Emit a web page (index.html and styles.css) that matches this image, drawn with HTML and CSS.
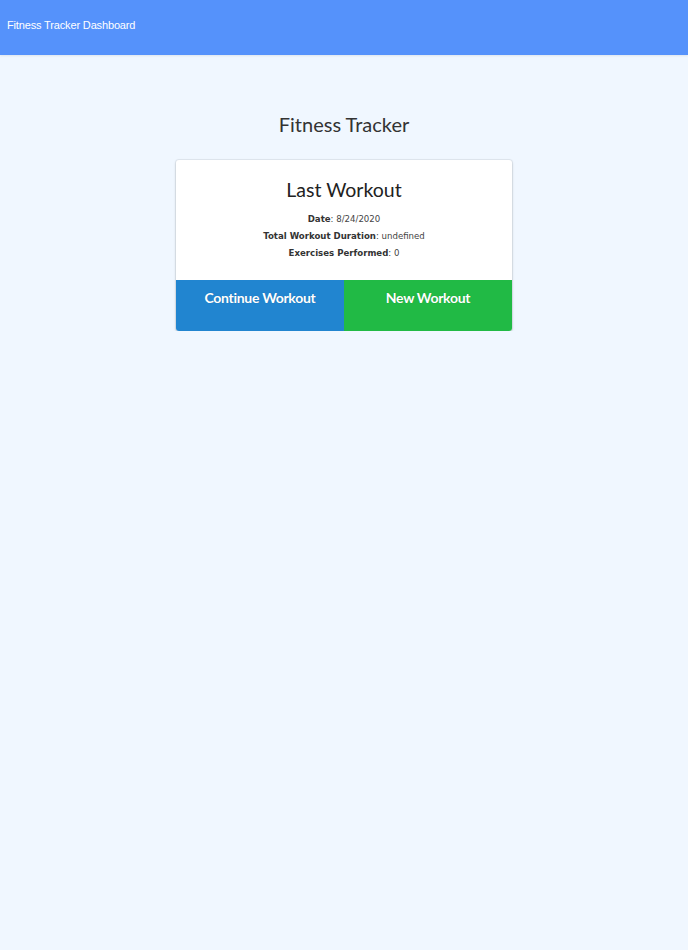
FILE: index.html
```html
<!DOCTYPE html>
<html>
<head>
<meta charset="utf-8">
<link rel="stylesheet" href="styles.css">
</head>
<body>
<header class="topbar">Fitness Tracker Dashboard</header>
<main class="content">
  <h1 class="page-title">Fitness Tracker</h1>
  <section class="card">
    <div class="card-body">
      <h2 class="card-title">Last Workout</h2>
      <p class="stat"><strong>Date</strong>: 8/24/2020</p>
      <p class="stat"><strong>Total Workout Duration</strong>: undefined</p>
      <p class="stat"><strong>Exercises Performed</strong>: 0</p>
    </div>
    <div class="actions">
      <button class="btn btn-blue">Continue Workout</button>
      <button class="btn btn-green">New Workout</button>
    </div>
  </section>
</main>
</body>
</html>
```
FILE: styles.css
```css
html, body {
  margin: 0;
  padding: 0;
  background: #f0f7ff;
  min-height: 100%;
}
body {
  font-family: Lato, "Liberation Sans", sans-serif;
}
.topbar {
  height: 55px;
  background: #5592fb;
  color: #fff;
  font-family: "Liberation Sans", Arial, sans-serif;
  font-size: 11px;
  line-height: 12px;
  letter-spacing: -0.15px;
  padding: 19px 0 0 7px;
  box-sizing: border-box;
  box-shadow: 0 1px 2px rgba(0,0,0,0.08);
}
.content {
  display: flex;
  flex-direction: column;
  align-items: center;
}
.page-title {
  margin: 57px 0 24px;
  font-weight: 400;
  font-size: 20px;
  line-height: 24px;
  color: #333;
}
.card {
  width: 336px;
  background: #fff;
  border-radius: 3px;
  box-shadow: 0 1px 3px rgba(0,0,0,0.18), 0 0 0 1px rgba(34,36,38,0.06);
  overflow: hidden;
}
.card-body {
  padding: 17px 0 18px;
  text-align: center;
}
.card-title {
  margin: 0 0 8px;
  font-weight: 400;
  font-size: 19.5px;
  line-height: 26px;
  color: #222;
}
.stat {
  margin: 0;
  font-family: "DejaVu Sans", Verdana, sans-serif;
  font-size: 8.6px;
  line-height: 17px;
  color: #444;
}
.stat strong {
  color: #333;
}
.actions {
  display: flex;
}
.btn {
  flex: 1;
  height: 51px;
  border: 0;
  margin: 0;
  padding: 9px 0 0;
  display: flex;
  justify-content: center;
  align-items: flex-start;
  font-family: Lato, sans-serif;
  font-weight: 700;
  font-size: 14px;
  letter-spacing: -0.3px;
  color: #fff;
  text-shadow: 0 0 1px rgba(0,0,0,0.2);
}
.btn-blue { background: #2185d0; }
.btn-green { background: #21ba45; }
```
